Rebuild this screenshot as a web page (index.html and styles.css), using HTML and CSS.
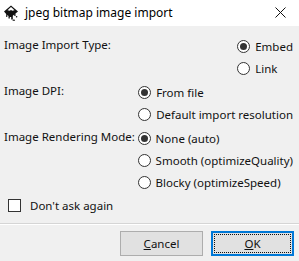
FILE: index.html
```html
<!DOCTYPE html>
<html>
<head>
<meta charset="utf-8">
<link rel="stylesheet" href="styles.css">
</head>
<body>
<div class="window">
  <div class="titlebar">
    <svg class="appicon" width="16" height="16" viewBox="0 0 16 16">
      <path d="M8 0.5 L15 6.5 L12.5 8.5 L12.5 11 L11.3 11 L11.3 9.5 L9.8 10.8 L9.8 14.5 L8.2 14.5 L8.2 12 L6.8 12 L6.8 13.5 L5.5 13.5 L5.5 11 L4.3 10 L4.3 12 L3.2 12 L3.2 9 L1 6.5 Z" fill="#111"/>
      <path d="M8 2 L11.5 5.3 L9 5.8 L8 4.8 L7 5.8 L4.5 5.3 Z" fill="#fff"/>
      <ellipse cx="13.6" cy="11.8" rx="0.8" ry="0.8" fill="#111"/>
      <ellipse cx="10.8" cy="15.2" rx="1.3" ry="0.6" fill="#111"/>
    </svg>
    <span class="title">jpeg bitmap image import</span>
    <svg class="close" width="11" height="11" viewBox="0 0 11 11">
      <path d="M0.5 0.5 L10.5 10.5 M10.5 0.5 L0.5 10.5" stroke="#111" stroke-width="1"/>
    </svg>
  </div>
  <div class="content">
    <div class="row">
      <div class="label">Image Import Type:</div>
      <div class="group">
        <div class="radio checked"><span class="circle"></span><span>Embed</span></div>
        <div class="radio"><span class="circle"></span><span>Link</span></div>
      </div>
    </div>
    <div class="row">
      <div class="label">Image DPI:</div>
      <div class="group">
        <div class="radio checked"><span class="circle"></span><span>From file</span></div>
        <div class="radio"><span class="circle"></span><span>Default import resolution</span></div>
      </div>
    </div>
    <div class="row">
      <div class="label">Image Rendering Mode:</div>
      <div class="group">
        <div class="radio checked"><span class="circle"></span><span>None (auto)</span></div>
        <div class="radio"><span class="circle"></span><span>Smooth (optimizeQuality)</span></div>
        <div class="radio"><span class="circle"></span><span>Blocky (optimizeSpeed)</span></div>
      </div>
    </div>
    <div class="check"><span class="box"></span><span>Don't ask again</span></div>
  </div>
  <div class="sep"></div>
  <div class="buttons">
    <div class="btn"><span class="u">C</span>ancel</div>
    <div class="btn default"><span class="focus"><span class="u">O</span>K</span></div>
  </div>
</div>
</body>
</html>
```
FILE: styles.css
```css
html, body {
  margin: 0;
  padding: 0;
}
body {
  width: 299px;
  height: 261px;
  overflow: hidden;
  background: #f0f0f0;
  font-family: "Noto Sans", "Open Sans", sans-serif;
  font-size: 11.5px;
  color: #111;
}
.window {
  width: 299px;
  height: 261px;
  display: flex;
  flex-direction: column;
  background: #f0f0f0;
}
.titlebar {
  height: 26px;
  background: #fff;
  display: flex;
  align-items: center;
  padding-left: 3px;
  padding-right: 13px;
  box-sizing: border-box;
  flex: none;
}
.appicon {
  flex: none;
  margin-top: -1px;
}
.title {
  margin-left: 6px;
  font-size: 12px;
  flex: 1;
  margin-top: -2px;
  color: #000;
}
.close {
  flex: none;
  margin-top: -2px;
}
.content {
  padding: 9px 6px 0 4px;
  display: flex;
  flex-direction: column;
  gap: 1px;
  height: 190px;
  box-sizing: border-box;
  flex: none;
}
.row {
  display: flex;
  justify-content: space-between;
  align-items: flex-start;
}
.row + .row {
  margin-top: 1px;
}
.label {
  height: 22px;
  line-height: 20px;
}
.group {
  display: flex;
  flex-direction: column;
}
.radio {
  display: flex;
  align-items: center;
  height: 22px;
  gap: 5px;
}
.circle {
  width: 11px;
  height: 11px;
  border: 1px solid #333;
  border-radius: 50%;
  background: #fff;
  position: relative;
  flex: none;
}
.radio.checked .circle::after {
  content: "";
  position: absolute;
  left: 2px;
  top: 2px;
  width: 7px;
  height: 7px;
  border-radius: 50%;
  background: #333;
}
.check {
  display: flex;
  align-items: center;
  gap: 9px;
  margin-left: 4px;
  height: 22px;
  margin-top: 0;
}
.box {
  width: 11px;
  height: 11px;
  border: 1px solid #333;
  background: #fff;
  flex: none;
}
.sep {
  height: 1px;
  background: #d5d5d5;
  margin-top: 7px;
  border-bottom: 1px solid #fff;
  flex: none;
}
.buttons {
  display: flex;
  justify-content: flex-end;
  gap: 8px;
  padding: 6px 5px 0 0;
}
.btn {
  width: 81px;
  height: 23px;
  border: 1px solid #adadad;
  background: #e1e1e1;
  display: flex;
  align-items: center;
  justify-content: center;
  box-sizing: content-box;
}
.btn.default {
  border: 1px solid #0078d7;
  box-shadow: inset 0 0 0 1px #0078d7;
}
.focus {
  display: flex;
  align-items: center;
  justify-content: center;
  width: 75px;
  height: 17px;
  outline: 1px dotted #111;
}
.u {
  text-decoration: underline;
}
```
